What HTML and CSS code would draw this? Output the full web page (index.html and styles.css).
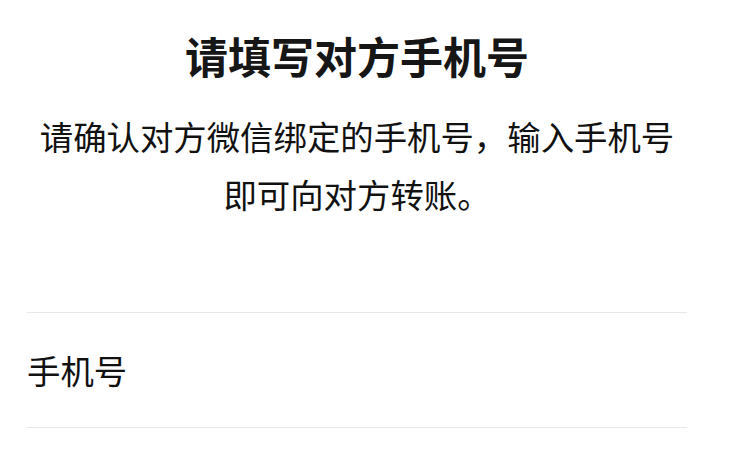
FILE: index.html
```html
<!DOCTYPE html>
<html lang="zh-CN">
<head>
<meta charset="utf-8">
<title>请填写对方手机号</title>
<link rel="stylesheet" href="styles.css">
</head>
<body>
<main class="page">
  <h1 class="title">请填写对方手机号</h1>
  <p class="desc">请确认对方微信绑定的手机号，输入手机号<br>即可向对方转账。</p>
  <div class="field">
    <span class="label">手机号</span>
  </div>
</main>
</body>
</html>
```

FILE: styles.css
```css
html, body {
  margin: 0;
  padding: 0;
  background: #ffffff;
}
body {
  font-family: "Noto Sans CJK SC", "Noto Sans", sans-serif;
  color: #111111;
}
.page {
  width: 660px;
  margin-left: 27px;
  display: flex;
  flex-direction: column;
}
.title {
  margin: 25px 0 0;
  font-size: 43px;
  line-height: 60px;
  font-weight: 700;
  text-align: center;
  color: #161616;
}
.desc {
  margin: 22px 0 0;
  font-size: 33.4px;
  line-height: 58px;
  text-align: center;
  color: #111111;
}
.field {
  margin-top: 89px;
  height: 114px;
  border-top: 1px solid #e8e8e8;
  border-bottom: 1px solid #e8e8e8;
  display: flex;
  align-items: center;
}
.label {
  font-size: 33.4px;
  line-height: 58px;
  color: #111111;
}
```
